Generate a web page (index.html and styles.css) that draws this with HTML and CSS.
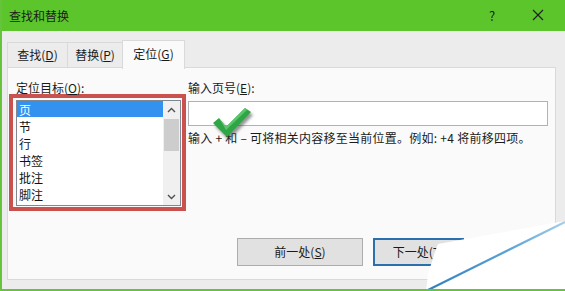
FILE: index.html
```html
<!DOCTYPE html>
<html lang="zh-CN">
<head>
<meta charset="utf-8">
<title>查找和替换</title>
<link rel="stylesheet" href="styles.css">
</head>
<body>
<div class="window">
  <div class="titlebar">
    <span class="title">查找和替换</span>
    <span class="help">?</span>
    <span class="close"><svg width="12" height="12" viewBox="0 0 12 12"><path d="M1 1 L11 11 M11 1 L1 11" stroke="#1e1e1e" stroke-width="1.1" fill="none"/></svg></span>
  </div>
  <div class="body">
    <div class="tabs">
      <div class="tab">查找(<u>D</u>)</div>
      <div class="tab">替换(<u>P</u>)</div>
      <div class="tab active">定位(<u>G</u>)</div>
    </div>
    <div class="panel">
      <div class="cols">
        <div class="col-left">
          <div class="label label-left">定位目标(<u>O</u>):</div>
          <div class="highlight">
            <div class="listbox">
              <ul class="items">
                <li class="item selected">页</li>
                <li class="item">节</li>
                <li class="item">行</li>
                <li class="item">书签</li>
                <li class="item">批注</li>
                <li class="item">脚注</li>
              </ul>
              <div class="scrollbar">
                <div class="arrow"><svg width="9" height="6" viewBox="0 0 9 6"><path d="M1 5 L4.5 1.5 L8 5" stroke="#505050" stroke-width="1.4" fill="none"/></svg></div>
                <div class="thumb"></div>
                <div class="track"></div>
                <div class="arrow"><svg width="9" height="6" viewBox="0 0 9 6"><path d="M1 1 L4.5 4.5 L8 1" stroke="#505050" stroke-width="1.4" fill="none"/></svg></div>
              </div>
            </div>
          </div>
        </div>
        <div class="col-right">
          <div class="label">输入页号(<u>E</u>):</div>
          <div class="input"></div>
          <p class="hint">输入 + 和 – 可将相关内容移至当前位置。例如: +4 将前移四项。</p>
        </div>
      </div>
      <div class="buttons">
        <button class="btn btn-wide">前一处(<u>S</u>)</button>
        <button class="btn btn-default">下一处(<u>T</u>)</button>
        <button class="btn btn-close">关闭</button>
      </div>
    </div>
  </div>
  <svg class="check" width="50" height="45" viewBox="0 0 50 45">
    <path d="M2 16 L8 11 L15 20 L34 1 L40 5 L16 30 Z" fill="#2ea645"/>
    <path d="M8 11 L15 20 L34 1 L36 3 L15 23 Z" fill="#5cc46a"/>
  </svg>
  <svg class="curl" width="145" height="75" viewBox="0 0 145 75">
    <defs>
      <linearGradient id="edge" x1="0" y1="1" x2="1" y2="0">
        <stop offset="0" stop-color="#2f7fbf"/>
        <stop offset="0.6" stop-color="#5aa3d6"/>
        <stop offset="1" stop-color="#a8cfe8"/>
      </linearGradient>
    </defs>
    <polygon points="18,28 145,5 145,75 6,75 8,58 16,33" fill="#ffffff"/>
    <line x1="6" y1="75" x2="145" y2="6" stroke="url(#edge)" stroke-width="2.2"/>
  </svg>
</div>
</body>
</html>
```
FILE: styles.css
```css
* { box-sizing: border-box; }
html, body { margin: 0; padding: 0; background: #ffffff; }
body {
  font-family: "Noto Sans CJK SC", "Noto Sans", sans-serif;
  font-size: 12px;
  color: #1a1a1a;
}
u { text-decoration: underline; text-underline-offset: 1px; }

.window {
  position: relative;
  width: 565px;
  height: 291px;
  border-left: 2px solid #66c43c;
  border-bottom: 2px solid #66c43c;
  overflow: hidden;
}

.titlebar {
  height: 31px;
  background: #5bc52b;
  display: flex;
  align-items: center;
  padding-left: 7px;
  padding-bottom: 1px;
}
.title { flex: 1; font-size: 12px; color: #1c1c1c; }
.help { width: 10px; text-align: center; margin-right: 35px; font-size: 13px; color: #1c1c1c; }
.close { width: 12px; height: 12px; margin-right: 21px; display: flex; }

.body {
  background: #ececec;
  height: 258px;
  padding: 9px 0 9px 5px;
}

.tabs {
  display: flex;
  align-items: flex-end;
  height: 27px;
  position: relative;
  z-index: 2;
}
.tab {
  height: 25px;
  border: 1px solid #d9d9d9;
  border-bottom: none;
  background: #ececec;
  display: flex;
  align-items: center;
  justify-content: center;
  color: #1a1a1a;
  line-height: 14px;
}
.tab:nth-child(1) { width: 61px; }
.tab:nth-child(2) { width: 56px; margin-left: -1px; }
.tab.active {
  width: 63px;
  height: 29px;
  margin-left: -1px;
  margin-bottom: -2px;
  background: #fafafa;
  padding-bottom: 3px;
}

.panel {
  width: 549px;
  height: 213px;
  background: #fafafa;
  border: 1px solid #d9d9d9;
  padding: 14px 0 13px 0;
  position: relative;
  z-index: 1;
}

.cols { display: flex; gap: 2px; height: 129px; }
.col-left { width: 178px; padding-left: 1px; }
.col-right { width: 360px; }
.label { line-height: 12px; height: 12px; white-space: nowrap; }
.label-left { padding-left: 7px; }

.highlight {
  width: 177px;
  height: 117px;
  border: 4px solid #c9524f;
  padding: 2px 1px 1px 3px;
  background: #fafafa;
}
.listbox {
  width: 165px;
  height: 106px;
  border: 1px solid #828790;
  background: #ffffff;
  display: flex;
}
.items {
  list-style: none;
  margin: 0;
  padding: 0;
  width: 146px;
}
.item {
  height: 17px;
  line-height: 18px;
  padding-left: 2px;
  color: #111;
}
.item.selected { background: #3391ef; color: #ffffff; height: 16px; line-height: 17px; margin-bottom: 1px; }

.scrollbar {
  width: 17px;
  background: #f0f0f0;
  display: flex;
  flex-direction: column;
}
.arrow { height: 17px; display: flex; align-items: center; justify-content: center; }
.thumb { height: 32px; margin: 1px 1px 0 1px; background: #cdcdcd; }
.track { flex: 1; }

.input {
  width: 360px;
  height: 25px;
  margin-top: 7px;
  border: 1px solid #b2b2b2;
  background: #ffffff;
}
.hint {
  margin: 4px 0 0 0;
  line-height: 16px;
  white-space: nowrap;
  letter-spacing: 0.25px;
  color: #1a1a1a;
}

.buttons {
  display: flex;
  justify-content: flex-end;
  gap: 10px;
  margin-top: 27px;
  padding-right: 6px;
}
.btn {
  height: 28px;
  font-family: inherit;
  font-size: 12px;
  color: #1a1a1a;
  background: #e1e1e1;
  border: 1px solid #adadad;
  padding: 0;
  line-height: 14px;
}
.btn-wide { width: 126px; }
.btn-default { width: 91px; border: 2px solid #2c6fae; }
.btn-close { width: 75px; }

.check {
  position: absolute;
  left: 209px;
  top: 107px;
  filter: drop-shadow(2px 3px 1.5px rgba(60, 60, 60, 0.55));
  z-index: 5;
}
.curl {
  position: absolute;
  right: 0;
  bottom: -2px;
  z-index: 6;
}
```
